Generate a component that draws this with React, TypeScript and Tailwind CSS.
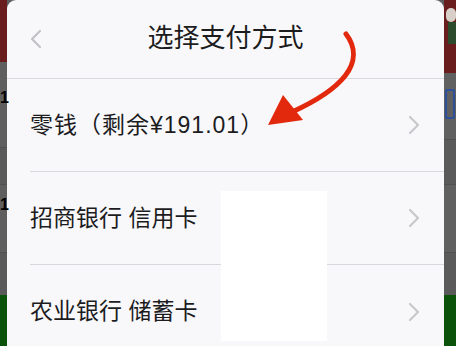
import React from "react";

const rows = ["零钱（剩余¥191.01）", "招商银行 信用卡", "农业银行 储蓄卡"];

function Chevron({ className, left }: { className?: string; left?: boolean }) {
  return (
    <svg viewBox="0 0 12 20" className={className} fill="none">
      <path
        d={left ? "M10 2 L2 10 L10 18" : "M2 2 L10 10 L2 18"}
        stroke="currentColor"
        strokeWidth="2.2"
        strokeLinecap="round"
        strokeLinejoin="round"
      />
    </svg>
  );
}

export default function App() {
  return (
    <div
      className="relative flex w-[456px] h-[346px] overflow-hidden bg-[#5e5e5e]"
      style={{ fontFamily: '"Liberation Sans", "Noto Sans CJK SC", sans-serif' }}
    >
      {/* dimmed page behind, left edge */}
      <div className="w-[7px] flex flex-col shrink-0">
        <div className="h-[62px] bg-[#6a1d1d]" />
        <div className="h-[86px] bg-[#5f5f5f] border-b border-[#505050] relative">
          <span className="absolute left-0 top-[28px] text-[16px] leading-none font-bold text-black">1</span>
        </div>
        <div className="h-[37px] bg-[#5a5a5a] border-b border-[#505050]" />
        <div className="h-[68px] bg-[#5f5f5f] border-b border-[#505050] relative">
          <span className="absolute left-0 top-[12px] text-[16px] leading-none font-bold text-black">1</span>
        </div>
        <div className="h-[42px] bg-[#5a5a5a]" />
        <div className="flex-1 bg-[#0b520b]" />
      </div>

      {/* sheet */}
      <div className="flex-1 bg-[#f8f8fa] rounded-t-[9px] flex flex-col text-[#1c1c1e]">
        <div className="h-[79px] shrink-0 flex items-center relative border-b border-[#d8d8dc]">
          <Chevron left className="absolute left-[23px] top-[29px] w-[12px] h-[20px] text-[#c2c2c6]" />
          <div className="w-full text-center text-[26px] leading-none pb-[2px]">选择支付方式</div>
        </div>
        {rows.map((r, i) => (
          <div key={i} className="h-[93px] shrink-0 flex items-center pl-[23px]">
            <div className={`flex-1 h-full flex items-center ${i < 2 ? "border-b border-[#d8d8dc]" : ""}`}>
              <span className={`flex-1 text-[23px] leading-none ${i === 0 ? "tracking-[1px]" : ""}`}>{r}</span>
              <Chevron className="w-[12px] h-[20px] text-[#c8c8cc] mr-[24px]" />
            </div>
          </div>
        ))}
      </div>

      {/* dimmed page behind, right edge */}
      <div className="w-[12px] flex flex-col shrink-0">
        <div className="h-[73px] bg-[#6a1d1d] relative">
          <div className="absolute left-[2px] top-[8px] w-[10px] h-[14px] rounded-full bg-[#d8d0c8]" />
          <div className="absolute left-[4px] top-[22px] w-[8px] h-[22px] bg-[#2c4a2c]" />
        </div>
        <div className="h-[67px] bg-[#606060] border-b border-[#505050] relative">
          <div className="absolute left-[1px] top-[16px] w-[10px] h-[30px] border-2 border-[#2e4f9a] rounded-[2px]" />
        </div>
        <div className="h-[45px] bg-[#5a5a5a] border-b border-[#505050]" />
        <div className="h-[68px] bg-[#606060] border-b border-[#505050]" />
        <div className="h-[42px] bg-[#5a5a5a]" />
        <div className="flex-1 bg-[#0b520b]" />
      </div>

      {/* redaction box */}
      <div className="absolute left-[221px] top-[191px] w-[106px] h-[150px] bg-white" />

      {/* annotation arrow */}
      <svg className="absolute inset-0 pointer-events-none" width="456" height="346" viewBox="0 0 456 346">
        <path
          d="M346 34 C356 47 356 62 345 76 C333 91 314 102 292 112"
          stroke="#e2290d"
          strokeWidth="5"
          fill="none"
          strokeLinecap="round"
        />
        <polygon points="283,95 268,125 303,120" fill="#e2290d" />
      </svg>
    </div>
  );
}
